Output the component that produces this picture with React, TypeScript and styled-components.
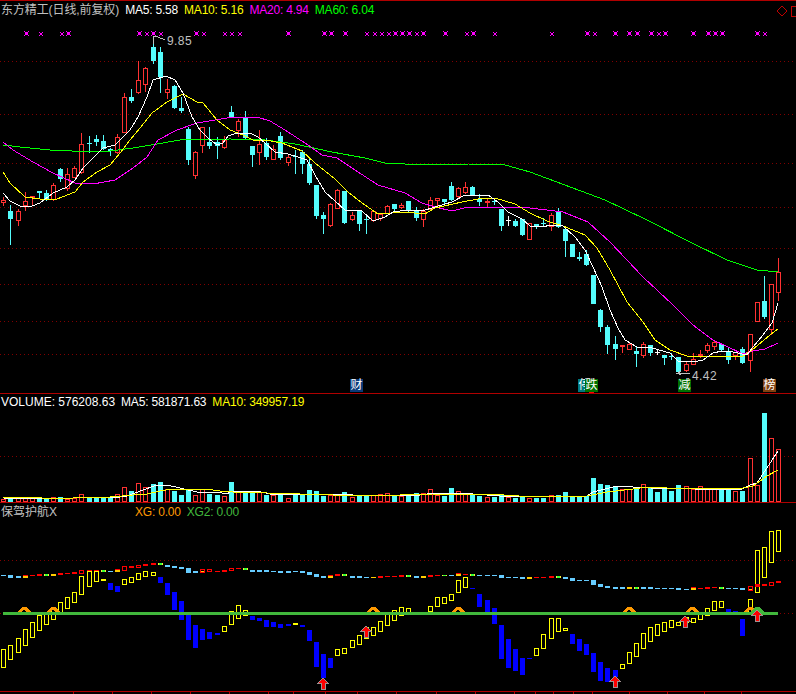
import React from "react";
import styled, { createGlobalStyle } from "styled-components";

type Candle = [number, number, number, number, "r" | "c", boolean?];

const barX = (i: number) => Math.round(3.3 + 7.107 * i);

// body top, body bottom, wick top, wick bottom, colour, doji
const candles: Candle[] = [
  [200, 203, 197, 206, "r"], [211, 219, 205, 245, "c"], [211, 221, 209, 226, "r"], [201, 206, 192, 211, "r"],
  [196, 198, 196, 206, "r"], [191, 193, 191, 198, "c"], [193, 200, 190, 201, "c"], [185, 200, 183, 201, "r"],
  [169, 179, 168, 182, "c"], [174, 189, 168, 191, "r"], [168, 178, 166, 178, "r"], [144, 173, 133, 174, "r"],
  [143, 144, 136, 153, "c"], [139, 142, 135, 146, "c"], [141, 149, 135, 150, "c"], [149, 151, 148, 156, "c"],
  [137, 153, 134, 154, "r"], [97, 133, 93, 133, "r"], [97, 101, 89, 103, "c"], [80, 93, 61, 94, "r"],
  [68, 85, 67, 92, "r"], [47, 61, 36, 64, "c"], [52, 77, 47, 93, "c"], [89, 93, 79, 99, "r"],
  [86, 108, 85, 109, "c"], [108, 111, 97, 113, "c"], [129, 160, 127, 165, "c"], [152, 176, 151, 179, "r"],
  [127, 146, 127, 153, "r"], [142, 146, 127, 149, "c"], [142, 146, 137, 159, "c"], [140, 148, 136, 149, "r"],
  [112, 117, 106, 117, "c"], [121, 131, 119, 137, "r"], [117, 138, 111, 139, "c"], [146, 155, 146, 167, "c"],
  [144, 153, 130, 165, "r"], [143, 157, 138, 160, "c"], [149, 160, 145, 160, "r"], [136, 158, 132, 160, "c"],
  [157, 163, 154, 166, "r"], [156, 157, 150, 174, "c"], [152, 164, 150, 174, "c"], [164, 183, 159, 185, "c"],
  [185, 216, 185, 219, "c"], [215, 219, 212, 234, "c"], [204, 226, 203, 227, "r"], [190, 209, 189, 209, "r"],
  [191, 223, 191, 224, "c"], [215, 220, 212, 221, "r"], [211, 224, 210, 231, "c"], [219, 220, 215, 234, "c"],
  [211, 221, 210, 222, "r"], [214, 219, 213, 221, "r"], [206, 214, 205, 214, "r"], [204, 209, 204, 211, "c"],
  [205, 208, 203, 209, "r"], [201, 211, 201, 212, "c"], [210, 218, 207, 221, "c"], [211, 220, 209, 227, "r"],
  [200, 210, 197, 211, "r"], [198, 201, 198, 206, "r"], [199, 202, 199, 206, "c"], [186, 200, 182, 201, "c"],
  [188, 197, 187, 198, "r"], [187, 193, 182, 194, "r"], [187, 195, 186, 195, "c"], [199, 202, 194, 206, "c"],
  [201, 203, 198, 207, "r"], [201, 202, 198, 205, "c"], [209, 226, 209, 231, "c"], [220, 221, 216, 226, "r", true],
  [221, 226, 219, 227, "c"], [219, 235, 219, 236, "c"], [223, 240, 223, 240, "r"], [224, 227, 224, 229, "c"],
  [223, 224, 218, 227, "c"], [215, 227, 213, 231, "r"], [212, 227, 208, 228, "c"], [229, 241, 229, 257, "c"],
  [244, 257, 244, 257, "c"], [257, 259, 252, 261, "c"], [254, 265, 250, 266, "c"], [275, 304, 275, 304, "c"],
  [310, 327, 309, 332, "c"], [327, 345, 325, 354, "c"], [344, 349, 336, 360, "c"], [345, 347, 345, 353, "r"],
  [344, 350, 343, 350, "r"], [351, 354, 347, 367, "c"], [344, 356, 342, 358, "r"], [345, 353, 345, 356, "c"],
  [352, 353, 349, 355, "c", true], [355, 358, 355, 365, "c"], [356, 357, 353, 360, "c"], [357, 372, 357, 372, "c"],
  [364, 371, 361, 372, "r"], [359, 365, 353, 365, "r"], [354, 356, 350, 358, "r"], [345, 351, 343, 353, "r"],
  [342, 347, 341, 350, "r"], [344, 350, 344, 351, "c"], [352, 360, 347, 364, "c"], [352, 356, 352, 360, "r"],
  [349, 363, 347, 364, "c"], [334, 361, 334, 372, "r"], [302, 322, 302, 322, "r"], [301, 317, 276, 319, "c"],
  [284, 330, 284, 335, "r"], [272, 293, 258, 301, "r"],
];

const volumeTops = [
  499, 497, 498, 498, 498, 498, 498, 497, 497, 499, 498, 494, 497, 497, 497, 497, 494, 487, 491, 483, 487, 484,
  482, 489, 491, 495, 489, 495, 489, 494, 495, 496, 482, 492, 492, 492, 492, 495, 495, 495, 498, 493, 495, 490,
  491, 496, 495, 495, 492, 497, 495, 495, 495, 494, 493, 495, 496, 496, 493, 493, 489, 495, 496, 488, 491, 493,
  495, 496, 497, 497, 495, 497, 498, 496, 498, 498, 498, 495, 495, 492, 496, 496, 496, 478, 484, 485, 486, 489,
  489, 487, 484, 487, 492, 488, 491, 485, 486, 489, 486, 488, 488, 490, 490, 491, 491, 458, 485, 413, 438, 449,
];

const pts = (list: number[][]) => list.map((p) => p.join(",")).join(" ");

const ma5 = [
  [3, 193], [10, 201], [20, 206], [32, 206], [40, 203], [53, 193], [67, 187], [75, 180], [83, 168], [93, 158],
  [103, 148], [115, 145], [127, 133], [130, 130], [138, 117], [147, 97], [153, 80], [166, 76], [175, 80], [183, 93],
  [192, 117], [200, 130], [208, 138], [217, 145], [223, 143], [228, 136], [237, 133], [250, 133], [258, 137], [265, 143],
  [275, 152], [288, 154], [298, 157], [307, 160], [315, 175], [325, 192], [335, 201], [345, 210], [362, 211], [373, 221],
  [385, 217], [393, 212], [408, 210], [422, 211], [435, 207], [452, 202], [465, 195], [488, 195], [498, 202], [508, 212],
  [522, 219], [530, 226], [543, 227], [550, 225], [563, 226], [575, 237], [585, 250], [593, 267], [602, 287], [610, 310],
  [618, 328], [625, 340], [637, 347], [652, 348], [670, 353], [678, 361], [693, 362], [703, 360], [713, 353], [722, 351],
  [733, 352], [747, 355], [753, 347], [763, 335], [772, 323], [778, 303],
];

const ma10 = [
  [3, 172], [10, 183], [25, 197], [40, 199], [57, 199], [75, 192], [83, 182], [97, 172], [110, 165], [120, 153],
  [130, 140], [140, 128], [152, 113], [167, 102], [183, 94], [197, 102], [203, 103], [217, 120], [230, 130], [243, 135],
  [253, 140], [265, 140], [282, 143], [302, 151], [315, 163], [335, 179], [348, 192], [362, 203], [378, 214], [405, 212],
  [425, 214], [435, 208], [462, 202], [478, 199], [495, 198], [515, 204], [530, 213], [547, 221], [563, 226], [585, 235],
  [597, 248], [610, 270], [627, 302], [643, 322], [655, 340], [670, 350], [687, 356], [743, 356], [752, 350], [770, 335],
  [778, 329],
];

const ma20 = [
  [3, 142], [13, 150], [33, 162], [53, 173], [75, 183], [93, 184], [115, 180], [133, 168], [147, 157], [158, 140],
  [177, 130], [197, 123], [233, 117], [257, 117], [270, 121], [285, 130], [308, 145], [322, 155], [337, 158], [355, 170],
  [378, 185], [405, 193], [422, 203], [435, 207], [452, 211], [468, 207], [505, 207], [530, 208], [563, 212], [588, 222],
  [610, 242], [643, 277], [673, 305], [693, 325], [713, 340], [743, 354], [753, 351], [765, 349], [778, 343],
];

const ma60 = [
  [3, 145], [20, 147], [50, 150], [72, 151], [110, 151], [133, 148], [157, 144], [180, 140], [230, 139], [265, 140],
  [295, 144], [332, 152], [365, 158], [385, 163], [405, 164], [468, 164], [505, 165], [530, 172], [605, 200], [647, 220],
  [690, 242], [727, 260], [757, 270], [778, 272],
];

const volMa5 = [
  [3, 498], [67, 499], [80, 497], [92, 497], [113, 498], [127, 496], [143, 490], [157, 485], [167, 485], [180, 488],
  [197, 492], [217, 492], [227, 494], [230, 492], [257, 491], [270, 494], [333, 494], [353, 495], [413, 496], [427, 494],
  [447, 493], [460, 493], [500, 496], [533, 497], [587, 496], [593, 492], [617, 486], [627, 486], [633, 487], [650, 488],
  [740, 490], [750, 485], [757, 483], [778, 451],
];

const volMa10 = [
  [3, 497], [20, 497], [42, 498], [63, 499], [83, 497], [110, 497], [122, 496], [133, 495], [147, 494], [160, 491],
  [173, 489], [205, 489], [220, 491], [233, 492], [267, 493], [300, 494], [333, 495], [400, 495], [433, 494], [490, 494],
  [533, 497], [587, 496], [607, 492], [633, 489], [647, 487], [667, 488], [743, 488], [753, 486], [767, 476], [778, 470],
];

const volumeGrid = 456;

type Block = [number, number, "y" | "b"];

const blocks: Block[] = [
  [649, 668, "y"], [645, 660, "y"], [638, 653, "y"], [629, 646, "y"], [622, 638, "y"], [615, 631, "y"], [613, 625, "y"],
  [607, 620, "y"], [602, 613, "y"], [597, 609, "y"], [592, 603, "y"], [576, 595, "y"], [571, 587, "y"], [571, 582, "y"],
  [579, 581, "y"], [583, 590, "b"], [586, 592, "b"], [579, 585, "y"], [577, 583, "y"], [573, 580, "y"], [571, 577, "y"],
  [572, 576, "y"], [577, 583, "b"], [583, 595, "b"], [592, 610, "b"], [601, 620, "b"], [615, 640, "b"], [625, 648, "b"],
  [629, 640, "b"], [632, 639, "b"], [633, 635, "b"], [626, 632, "y"], [611, 625, "y"], [605, 619, "y"], [610, 616, "y"],
  [616, 620, "b"], [618, 621, "b"], [620, 627, "b"], [622, 627, "b"], [624, 628, "b"], [624, 626, "b"], [623, 625, "y"],
  [625, 627, "b"], [630, 641, "b"], [642, 667, "b"], [654, 678, "b"], [658, 668, "b"], [649, 656, "y"], [648, 654, "y"],
  [640, 648, "y"], [635, 645, "y"], [627, 639, "y"], [627, 636, "y"], [621, 632, "y"], [613, 626, "y"], [610, 621, "y"],
  [607, 616, "y"], [608, 613, "y"], [612, 614, "y"], [612, 614, "y"], [606, 612, "y"], [597, 607, "y"], [597, 604, "y"],
  [594, 601, "y"], [580, 593, "y"], [577, 588, "y"], [588, 589, "b"], [594, 607, "b"], [600, 612, "b"], [608, 624, "b"],
  [625, 659, "b"], [639, 668, "b"], [649, 671, "b"], [658, 675, "b"], [658, 659, "b"], [648, 656, "y"], [634, 649, "y"],
  [618, 639, "y"], [618, 632, "y"], [628, 631, "y"], [634, 644, "b"], [639, 651, "b"], [644, 655, "b"], [653, 672, "b"],
  [662, 681, "b"], [668, 682, "b"], [670, 677, "b"], [664, 669, "y"], [652, 664, "y"], [643, 657, "y"], [633, 649, "y"],
  [627, 642, "y"], [624, 636, "y"], [622, 632, "y"], [620, 628, "y"], [622, 626, "y"], [617, 623, "y"], [618, 623, "y"],
  [613, 620, "y"], [608, 616, "y"], [601, 611, "y"], [601, 608, "y"], [609, 613, "b"], [611, 613, "b"], [619, 636, "b"],
  [599, 613, "y"], [550, 593, "y"], [547, 578, "y"], [531, 563, "y"], [530, 552, "y"],
];

type Dash = [number, number, "s" | "r" | "y" | "g" | "ry" | "R" | "Ry"];

const dashes: Dash[] = [
  [575, 1, "s"], [575, 3, "s"], [576, 2, "s"], [576, 2, "ry"], [575, 1, "r"], [574, 2, "r"], [574, 2, "g"], [574, 2, "y"],
  [573, 2, "r"], [573, 1, "r"], [572, 2, "r"], [570, 3, "R"], [570, 1, "r"], [570, 1, "r"], [570, 2, "g"], [571, 1, "s"],
  [570, 2, "ry"], [566, 4, "R"], [566, 2, "r"], [565, 2, "R"], [564, 2, "r"], [563, 2, "r"], [563, 2, "g"], [565, 2, "s"],
  [566, 2, "s"], [567, 2, "s"], [568, 5, "s"], [571, 2, "s"], [569, 3, "Ry"], [569, 2, "R"], [571, 1, "r"], [570, 2, "r"],
  [568, 2, "R"], [568, 1, "r"], [568, 2, "g"], [570, 2, "s"], [570, 2, "s"], [570, 2, "s"], [571, 1, "s"], [571, 2, "s"],
  [571, 2, "s"], [571, 1, "s"], [571, 2, "s"], [572, 3, "s"], [574, 3, "s"], [576, 2, "s"], [576, 2, "ry"], [574, 2, "r"],
  [574, 2, "g"], [576, 2, "s"], [576, 2, "s"], [577, 1, "s"], [577, 1, "y"], [576, 2, "r"], [576, 1, "r"], [576, 1, "r"],
  [575, 2, "r"], [575, 2, "g"], [576, 2, "s"], [576, 2, "y"], [575, 2, "r"], [575, 1, "r"], [575, 1, "g"], [575, 1, "s"],
  [574, 2, "ry"], [574, 1, "r"], [574, 2, "g"], [575, 1, "s"], [575, 1, "s"], [575, 1, "s"], [575, 3, "s"], [577, 1, "s"],
  [577, 1, "s"], [577, 2, "s"], [577, 2, "y"], [577, 1, "r"], [577, 1, "r"], [576, 2, "r"], [576, 2, "g"], [577, 2, "s"],
  [578, 3, "s"], [580, 1, "s"], [580, 1, "s"], [580, 5, "s"], [584, 3, "s"], [586, 2, "s"], [587, 2, "s"], [587, 2, "s"],
  [587, 2, "y"], [587, 2, "g"], [587, 2, "s"], [587, 2, "s"], [588, 1, "s"], [588, 1, "s"], [588, 1, "s"], [588, 2, "s"],
  [589, 1, "s"], [588, 2, "ry"], [588, 1, "r"], [587, 2, "r"], [587, 1, "r"], [587, 2, "g"], [588, 1, "s"], [588, 1, "s"],
  [588, 2, "s"], [586, 4, "Ry"], [584, 3, "r"], [584, 2, "r"], [582, 3, "R"], [581, 2, "r"],
];

const bigMarks = [
  26, 68, 139, 153, 196, 288, 324, 331, 345, 395, 402, 409, 423, 445, 473, 587, 615, 629, 637, 651, 665, 693, 708, 715,
  722, 757,
];
const smallMarks = [40, 61, 146, 160, 203, 224, 231, 239, 366, 374, 381, 388, 416, 466, 494, 551, 594, 658, 764];

const chevrons = [24, 53, 373, 458, 629, 692, 750];
const arrows = [
  [323, 678],
  [366, 626],
  [615, 676],
  [685, 616],
  [757, 610],
];
const ticks = [
  73, 112, 151, 190, 229, 268, 293, 325, 357, 396, 436, 475, 514, 535, 553, 573, 592, 629, 667, 704, 741,
];

const COLORS = {
  cyan: "#54fcfc",
  red: "#ff3232",
  border: "#b00000",
  grid: "#800000",
  grey: "#c0c0c0",
  sky: "#66ccff",
  green: "#41b83c",
  orange: "#ff9900",
};

const GlobalStyle = createGlobalStyle`
  html, body {
    margin: 0;
    background: #000;
  }
`;

const Page = styled.div`
  width: 796px;
  height: 694px;
  overflow: hidden;
  background: #000;
  font-family: "Liberation Sans", "Noto Sans CJK SC", sans-serif;
  font-size: 12px;
`;

const Panel = styled.section<{ $height: number }>`
  position: relative;
  height: ${(p) => p.$height}px;
  box-sizing: border-box;
  border-top: 1px solid ${COLORS.border};
`;

const Chart = styled.svg`
  display: block;
  width: 796px;
  height: 100%;
  shape-rendering: crispEdges;
`;

const Legend = styled.div<{ $top: number }>`
  position: absolute;
  top: ${(p) => p.$top}px;
  left: 1px;
  right: 0;
  display: flex;
  align-items: center;
  gap: 6px;
  line-height: 14px;
  white-space: nowrap;
`;

const LegendItem = styled.span<{ $color: string; $spacing?: number }>`
  color: ${(p) => p.$color};
  letter-spacing: ${(p) => p.$spacing ?? -0.2}px;
`;

const IndicatorName = styled.span`
  width: 128px;
  color: ${COLORS.grey};
`;

const WindowIcons = styled.svg`
  position: absolute;
  top: 4px;
  right: 0;
  width: 20px;
  height: 13px;
  shape-rendering: crispEdges;
`;

const Badge = styled.span<{ $left: number; $bg: string }>`
  position: absolute;
  top: 378px;
  left: ${(p) => p.$left}px;
  width: 13px;
  height: 13px;
  background: ${(p) => p.$bg};
  color: #fff;
  font-size: 12px;
  line-height: 13px;
  text-align: center;
`;

const PriceNote = styled.span<{ $left: number; $top: number }>`
  position: absolute;
  left: ${(p) => p.$left}px;
  top: ${(p) => p.$top}px;
  color: ${COLORS.grey};
  font-size: 12px;
  line-height: 14px;
  letter-spacing: 0.4px;
`;

const Axis = styled.svg`
  display: block;
  width: 796px;
  height: 3px;
  shape-rendering: crispEdges;
`;

const Dotted = ({ y, from = 0 }: { y: number; from?: number }) => (
  <line
    x1={from}
    x2={796}
    y1={y + 0.5}
    y2={y + 0.5}
    stroke={COLORS.grid}
    strokeDasharray="1 3"
    shapeRendering="geometricPrecision"
  />
);

// hollow when up, solid when down, same as the candles and the volume bars
const Body = ({ x, top, bottom, color, solid }: { x: number; top: number; bottom: number; color: string; solid: boolean }) =>
  solid ? (
    <rect x={x - 2} y={top} width={5} height={Math.max(bottom - top, 1)} fill={color} />
  ) : (
    <rect x={x - 1.5} y={top + 0.5} width={4} height={Math.max(bottom - top - 1, 1)} fill="#000" stroke={color} />
  );

const Mark = ({ x, big }: { x: number; big: boolean }) => {
  const y = 33;
  return big ? (
    <g fill="#ff00ff">
      <rect x={x - 1} y={y - 1} width={3} height={3} />
      <rect x={x - 2} y={y - 2} width={1} height={1} />
      <rect x={x + 2} y={y - 2} width={1} height={1} />
      <rect x={x - 2} y={y + 2} width={1} height={1} />
      <rect x={x + 2} y={y + 2} width={1} height={1} />
    </g>
  ) : (
    <g fill="#ff00ff">
      <rect x={x} y={y} width={2} height={2} />
      <rect x={x - 1} y={y - 1} width={1} height={1} />
      <rect x={x + 2} y={y - 1} width={1} height={1} />
      <rect x={x - 1} y={y + 2} width={1} height={1} />
      <rect x={x + 2} y={y + 2} width={1} height={1} />
    </g>
  );
};

const TrendLine = ({ points, color }: { points: number[][]; color: string }) => (
  <polyline points={pts(points)} fill="none" stroke={color} strokeWidth={1} />
);

const MainChart = () => (
  <Chart viewBox="0 1 796 392">
    {[61, 114, 163, 207, 248, 284, 321, 354].map((y) => (
      <Dotted key={y} y={y} />
    ))}
    {bigMarks.map((x) => (
      <Mark key={x} x={x} big />
    ))}
    {smallMarks.map((x) => (
      <Mark key={x} x={x} big={false} />
    ))}
    {candles.map(([top, bottom, high, low, kind, doji], i) => {
      const x = barX(i);
      const color = doji ? "#fff" : kind === "r" ? COLORS.red : COLORS.cyan;
      return (
        <g key={i}>
          <line x1={x + 0.5} x2={x + 0.5} y1={high} y2={low} stroke={color} />
          <Body x={x} top={top} bottom={bottom} color={color} solid={kind === "c" || !!doji} />
        </g>
      );
    })}
    <TrendLine points={ma60} color="#00ff00" />
    <TrendLine points={ma20} color="#ff00ff" />
    <TrendLine points={ma10} color="#ffff00" />
    <TrendLine points={ma5} color="#ffffff" />
    <polyline points="153,44 153,36 158,37 165,40" fill="none" stroke={COLORS.grey} />
    <polyline points="690,373 678,373 681,371 678,373 681,375" fill="none" stroke={COLORS.grey} />
    <rect x={589} y={392} width={5} height={1} fill="#ff0000" />
  </Chart>
);

const VolumeChart = () => (
  <Chart viewBox="0 394 796 108">
    <Dotted y={volumeGrid} />
    {volumeTops.map((top, i) => {
      const [, , , , kind, doji] = candles[i];
      const up = doji ? i === 71 : kind === "r";
      return <Body key={i} x={barX(i)} top={top} bottom={502} color={up ? COLORS.red : COLORS.cyan} solid={!up} />;
    })}
    <TrendLine points={volMa5} color="#ffffff" />
    <TrendLine points={volMa10} color="#ffff00" />
  </Chart>
);

const DashMark = ({ x, dash }: { x: number; dash: Dash }) => {
  const [y, h, kind] = dash;
  const l = x - 2;
  if (kind === "s") return <rect x={l} y={y} width={5} height={h} fill={COLORS.sky} />;
  if (kind === "r") return <rect x={l} y={y} width={5} height={h} fill="#ff0000" />;
  if (kind === "y") return <rect x={l} y={y} width={5} height={h} fill="#ffcc00" />;
  if (kind === "g")
    return (
      <g>
        <rect x={l} y={y} width={5} height={h} fill="#ffee33" />
        <rect x={l + 1} y={y} width={3} height={h} fill="#33ff33" />
      </g>
    );
  if (kind === "ry")
    return (
      <g>
        <rect x={l} y={y} width={5} height={h} fill="#ffcc00" />
        <rect x={l} y={y - 1} width={5} height={1} fill="#ff0000" />
      </g>
    );
  return (
    <g>
      {kind === "Ry" && <rect x={l} y={y + h - 1} width={5} height={2} fill="#ffcc00" />}
      <rect x={l + 0.5} y={y + 0.5} width={4} height={h} fill="none" stroke="#ff0000" />
    </g>
  );
};

const IndicatorChart = () => (
  <Chart viewBox="0 503 796 188">
    <Dotted y={560} />
    <Dotted y={613} />
    {blocks.map(([top, bottom, kind], i) => (
      <Body
        key={i}
        x={barX(i)}
        top={top}
        bottom={bottom}
        color={kind === "y" ? "#ffff00" : "#0000ff"}
        solid={kind === "b" || bottom - top < 3}
      />
    ))}
    {dashes.map((dash, i) => (
      <DashMark key={i} x={barX(i)} dash={dash} />
    ))}
    <rect x={3} y={612} width={775} height={3} fill={COLORS.green} />
    {chevrons.map((x) => (
      <polygon
        key={x}
        points={`${x - 7},612 ${x - 2},607 ${x + 2},607 ${x + 7},612 ${x + 3},612 ${x},610 ${x - 3},612`}
        fill={COLORS.orange}
      />
    ))}
    <polygon points="750,612 755,607 759,607 764,612 760,612 757,610 754,612" fill={COLORS.green} />
    {arrows.map(([x, y]) => (
      <polygon
        key={x}
        points={`${x},${y} ${x + 5},${y + 5} ${x + 2},${y + 5} ${x + 2},${y + 11} ${x - 2},${y + 11} ${x - 2},${y + 5} ${x - 5},${y + 5}`}
        fill="#ff0000"
        stroke="#a09090"
      />
    ))}
  </Chart>
);

export default function App() {
  return (
    <>
      <GlobalStyle />
      <Page>
        <Panel $height={393}>
          <MainChart />
          <Legend $top={2}>
            <LegendItem $color={COLORS.grey} $spacing={-0.1}>东方精工(日线,前复权)</LegendItem>
            <LegendItem $color="#ffffff">MA5: 5.58</LegendItem>
            <LegendItem $color="#ffff00">MA10: 5.16</LegendItem>
            <LegendItem $color="#ff00ff">MA20: 4.94</LegendItem>
            <LegendItem $color="#00ff00">MA60: 6.04</LegendItem>
          </Legend>
          <WindowIcons viewBox="0 0 20 13">
            <polygon points="6,1 11,6 6,11 1,6" fill="none" stroke="#c00000" />
            <rect x={15.5} y={1.5} width={8} height={10} fill="none" stroke="#c00000" />
          </WindowIcons>
          <PriceNote $left={167} $top={33}>9.85</PriceNote>
          <PriceNote $left={692} $top={368}>4.42</PriceNote>
          <Badge $left={350} $bg="#0a3a78">财</Badge>
          <Badge $left={578} $bg="#007a80">停</Badge>
          <Badge $left={585} $bg="#007000">跌</Badge>
          <Badge $left={678} $bg="#007000">减</Badge>
          <Badge $left={763} $bg="#804010">榜</Badge>
        </Panel>
        <Panel $height={109}>
          <VolumeChart />
          <Legend $top={1}>
            <LegendItem $color="#ffffff" $spacing={0}>VOLUME: 576208.63</LegendItem>
            <LegendItem $color="#ffffff">MA5: 581871.63</LegendItem>
            <LegendItem $color="#ffff00">MA10: 349957.19</LegendItem>
          </Legend>
        </Panel>
        <Panel $height={189}>
          <IndicatorChart />
          <Legend $top={2}>
            <IndicatorName>保驾护航X</IndicatorName>
            <LegendItem $color={COLORS.orange}>XG: 0.00</LegendItem>
            <LegendItem $color={COLORS.green}>XG2: 0.00</LegendItem>
          </Legend>
        </Panel>
        <Axis viewBox="0 691 796 3">
          <rect x={0} y={691} width={796} height={1} fill={COLORS.border} />
          {ticks.map((x) => (
            <rect key={x} x={x} y={691} width={1} height={3} fill={COLORS.border} />
          ))}
        </Axis>
      </Page>
    </>
  );
}
